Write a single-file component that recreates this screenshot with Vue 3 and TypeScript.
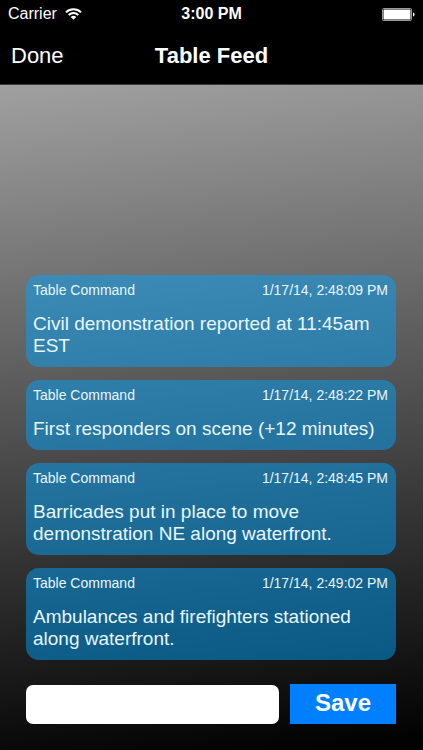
<script setup lang="ts">
import { ref } from 'vue'

interface FeedMessage {
  id: number
  author: string
  time: string
  body: string
}

const messages = ref<FeedMessage[]>([
  { id: 1, author: 'Table Command', time: '1/17/14, 2:48:09 PM', body: 'Civil demonstration reported at 11:45am EST' },
  { id: 2, author: 'Table Command', time: '1/17/14, 2:48:22 PM', body: 'First responders on scene (+12 minutes)' },
  { id: 3, author: 'Table Command', time: '1/17/14, 2:48:45 PM', body: 'Barricades put in place to move demonstration NE along waterfront.' },
  { id: 4, author: 'Table Command', time: '1/17/14, 2:49:02 PM', body: 'Ambulances and firefighters stationed along waterfront.' },
])

const draft = ref('')

function save(): void {
  const body = draft.value.trim()
  if (!body) return
  const now = new Date()
  const time = now.toLocaleDateString('en-US', { year: '2-digit', month: 'numeric', day: 'numeric' })
    + ', ' + now.toLocaleTimeString('en-US')
  messages.value.push({ id: messages.value.length + 1, author: 'Table Command', time, body })
  draft.value = ''
}
</script>

<template>
  <div class="screen">
    <header class="top">
      <div class="status">
        <div class="carrier">
          <span>Carrier</span>
          <svg class="wifi" viewBox="0 0 17 12" aria-hidden="true">
            <path d="M1 4.4a10.8 10.8 0 0 1 15 0" />
            <path d="M3.7 7a7 7 0 0 1 9.6 0" />
            <path class="dot" d="M8.5 11.8 5.7 9a4 4 0 0 1 5.6 0z" />
          </svg>
        </div>
        <span class="clock">3:00 PM</span>
        <svg class="battery" viewBox="0 0 33 13" aria-hidden="true">
          <rect class="shell" x="0.5" y="0.5" width="29" height="12" rx="1" />
          <rect class="charge" x="1.500" y="1.500" width="27" height="10" />
          <path class="charge" d="M31 4.500c2 .4 2 3.600 0 4z" />
        </svg>
      </div>
      <nav class="bar">
        <button type="button" class="done">Done</button>
        <h1>Table Feed</h1>
      </nav>
    </header>
    <main class="feed">
      <ul class="messages">
        <li v-for="message in messages" :key="message.id" class="card">
          <div class="meta">
            <span>{{ message.author }}</span>
            <time>{{ message.time }}</time>
          </div>
          <p>{{ message.body }}</p>
        </li>
      </ul>
      <form class="compose" @submit.prevent="save">
        <input v-model="draft" type="text" aria-label="Message">
        <button type="submit">Save</button>
      </form>
    </main>
  </div>
</template>

<style>
body {
  background: #000;
}
</style>

<style scoped>
.screen {
  display: flex;
  flex-direction: column;
  min-height: 100vh;
  color: #fff;
  font-family: "Liberation Sans", Arial, sans-serif;
}

.top {
  border-bottom: 1px solid #3c3a3c;
  background: #000;
}

.status {
  display: grid;
  grid-template-columns: 1fr auto 1fr;
  align-items: center;
  height: 28px;
  padding: 0 8px;
  font-size: 16px;
}

.carrier {
  display: flex;
  align-items: center;
  gap: 8px;
}

.wifi {
  width: 17px;
  height: 12px;
  fill: none;
  stroke: #fff;
  stroke-width: 2;
}

.wifi .dot {
  fill: #fff;
  stroke: none;
}

.clock {
  font-weight: 700;
}

.battery {
  justify-self: end;
  width: 33px;
  height: 13px;
}

.shell {
  fill: none;
  stroke: #999;
}

.charge {
  fill: #fff;
}

.bar {
  display: grid;
  grid-template-columns: 1fr auto 1fr;
  align-items: center;
  height: 56px;
  padding: 0 11px;
}

.done {
  justify-self: start;
  padding: 0;
  border: 0;
  background: none;
  color: #fff;
  font: inherit;
  font-size: 22px;
}

h1 {
  margin: 0;
  font-size: 22px;
}

.feed {
  display: flex;
  flex: 1;
  flex-direction: column;
  justify-content: flex-end;
  gap: 24px;
  padding: 24px 27px 26px 26px;
  background: linear-gradient(174deg, #a0a0a0, #020202 98%);
}

.messages {
  display: flex;
  flex-direction: column;
  gap: 13px;
  margin: 0;
  padding: 0;
  list-style: none;
}

.card {
  padding: 7px 8px 10px 7px;
  border-radius: 13px;
  background: rgba(0, 162, 255, 0.48);
  color: #e6f7ff;
}

.meta {
  display: flex;
  justify-content: space-between;
  font-size: 14px;
  line-height: 17px;
}

p {
  margin: 14px 0 0;
  font-size: 19px;
  line-height: 22px;
}

.compose {
  display: flex;
  align-items: center;
  gap: 11px;
}

.compose input {
  flex: 1;
  min-width: 0;
  height: 39px;
  box-sizing: border-box;
  padding: 0 8px;
  border: 0;
  border-radius: 7px;
  background: #fff;
  font: inherit;
  font-size: 19px;
}

.compose button {
  width: 106px;
  height: 40px;
  padding: 0 0 2px;
  border: 0;
  background: #0080ff;
  color: #fff;
  font: inherit;
  font-size: 24px;
  font-weight: 700;
}
</style>
